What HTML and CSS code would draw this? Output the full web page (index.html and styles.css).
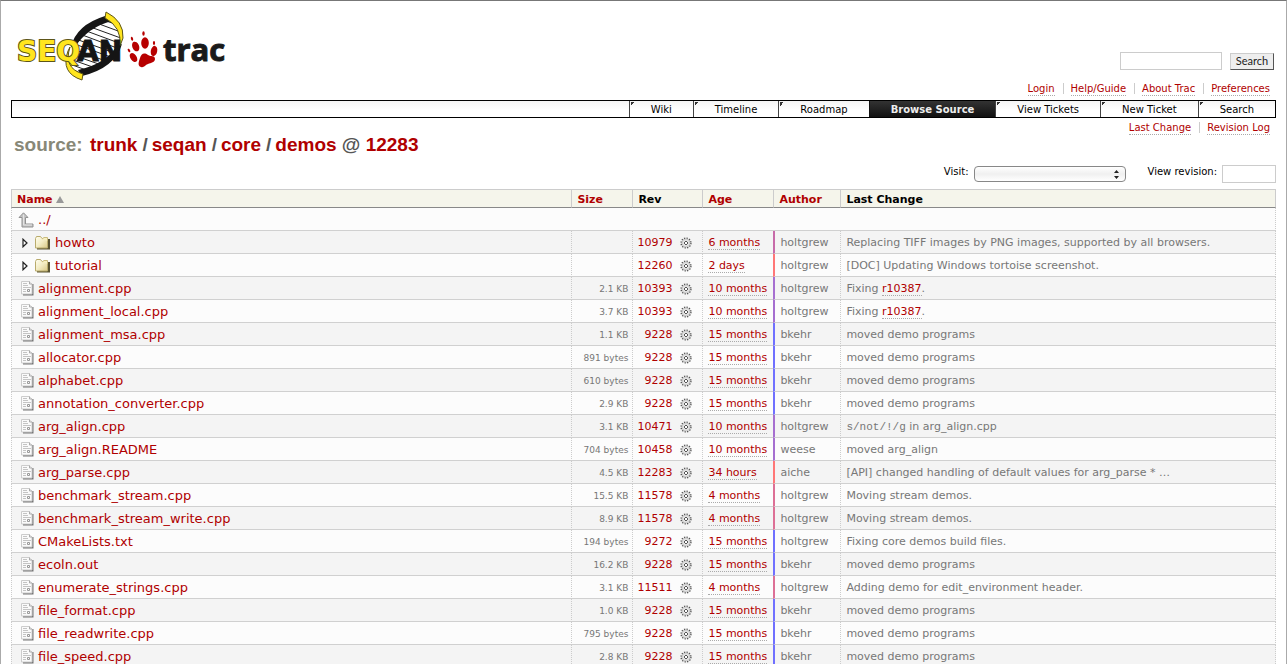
FILE: index.html
```
<!DOCTYPE html>
<html lang="en">
<head>
<meta charset="utf-8">
<title>trunk/seqan/core/demos – SeqAn Trac</title>
<link rel="stylesheet" href="styles.css">
</head>
<body>
<svg class="sprites" aria-hidden="true">
  <linearGradient id="fold" x1="0" y1="0" x2="1" y2="1"><stop offset="0" stop-color="#fffef0"/><stop offset=".5" stop-color="#f3ecc4"/><stop offset="1" stop-color="#d9c987"/></linearGradient>
  <symbol id="file" viewBox="0 0 13 15">
    <path d="M11.500 3V13.500H2" fill="none" stroke="#777" stroke-width="2"/>
    <path d="M.5.500h8l2.500 2.500v10H.5z" fill="#fafafa" stroke="#ccc"/>
    <path d="M8.500.500v2.500H11" fill="#eee" stroke="#aaa"/>
    <path d="M2 2.500h4M2 4.500h5M2 6.500h8M2 8.500h3M2 10.500h3" stroke="#c4c4c4"/>
    <path d="M6.500 8.500h2v2h-2z" fill="none" stroke="#999"/>
  </symbol>
  <symbol id="folder" viewBox="0 0 16 14">
    <path d="M14 3v9.500H2" fill="none" stroke="#5a5433" stroke-width="2"/>
    <path d="M.5 2.500l1-2h4l1.500 2h5.500v9.500H.5z" fill="url(#fold)" stroke="#b9ab6c"/>
    <path d="M7 3l2-1.500h3.500V5" fill="#f7efc0" stroke="#c9bb7c"/>
  </symbol>
  <symbol id="expand" viewBox="0 0 6 10"><path d="M1 1.200v7.600L5 5z" fill="#fff" stroke="#222" stroke-width="1.200"/></symbol>
  <symbol id="up" viewBox="0 0 16 16">
    <path d="M5.500.800L10 5.500H7.500v6.500H15v3H4V5.500H1z" fill="#c4c4c4" stroke="#929292"/>
    <path d="M5.500 2.500V13H14" fill="none" stroke="#e4e4e4"/>
  </symbol>
  <symbol id="gear" viewBox="0 0 12 12">
    <circle cx="6" cy="6" r="4.900" fill="#eee" stroke="#555" stroke-width="1.400" stroke-dasharray="1.280 1.280"/>
    <circle cx="6" cy="6" r="4" fill="#e2e2e2" stroke="#aaa" stroke-width=".5"/>
    <path d="M6 4l2 2-2 2-2-2z" fill="#fff" stroke="#444" stroke-width=".9"/>
  </symbol>
  <clipPath id="hull"><path d="M56 42Q60 18 88 7L103 14Q107 26 98 42Q88 56 64 63Q50 60 56 42Z"/></clipPath>
</svg>
<div class="page">
  <header class="banner">
    <a class="logo" href="#" aria-label="SeqAn trac">
      <svg width="208" height="72" viewBox="0 0 208 72">
        <path d="M56 42Q60 18 88 7L103 14Q107 26 98 42Q88 56 64 63Q50 60 56 42Z" fill="#fff"/>
        <path clip-path="url(#hull)" d="M78 6l34 12M74 10l38 14M68 14l44 16M64 18l46 17M60 22l48 18M56 27l50 18M52 31l50 18M50 36l50 18M50 42l46 16M50 47l40 14M50 52l30 11M50 57l25 9" stroke="#222"/>
        <path d="M54 36Q59 14 88 5L95 10Q71 16 58 36Z" fill="#151515"/>
        <path d="M61 59Q88 53 99 36L105 33Q98 57 65 65Z" fill="#151515"/>
        <path d="M89 1Q107 10 106 27L103 35Q105 16 88 7Z" fill="#ffe51f" stroke="#5d5518"/>
        <path d="M53 36Q46 57 66 63L65 69Q43 62 51 40Z" fill="#ffe51f" stroke="#5d5518"/>
        <text class="seq" x="0" y="50">SEQ</text>
        <text class="an" x="60" y="50">AN</text>
        <g fill="#b70000">
          <path d="M123 47C124 43 127 41 131 44C134 46 138 44 138 48C138 51 134 52 131 53C128 54 127 57 124 56C120 55 122 50 123 47Z"/>
          <ellipse cx="128" cy="32" rx="3.800" ry="5.700"/>
          <ellipse cx="118.700" cy="35.500" rx="3.400" ry="5" transform="rotate(-22 118.700 35.500)"/>
          <ellipse cx="137" cy="40" rx="3.200" ry="5.200" transform="rotate(12 137 40)"/>
          <ellipse cx="116.500" cy="46.500" rx="3.100" ry="5" transform="rotate(-35 116.500 46.500)"/>
          <ellipse cx="126.500" cy="22.500" rx="1.200" ry="2.200"/>
          <ellipse cx="115" cy="27.700" rx="1.100" ry="2" transform="rotate(-15 115 27.700)"/>
          <ellipse cx="137" cy="32" rx="1.100" ry="2"/>
          <ellipse cx="112" cy="39.500" rx="1.100" ry="1.900" transform="rotate(-30 112 39.500)"/>
        </g>
        <text class="trac" x="146" y="50">trac</text>
      </svg>
    </a>
    <form class="search">
      <input type="text" aria-label="Search query"><button type="button">Search</button>
    </form>
  </header>
  <nav class="links meta" aria-label="Account"><a href="#">Login</a><a href="#">Help/Guide</a><a href="#">About Trac</a><a href="#">Preferences</a></nav>
  <nav class="mainnav" aria-label="Main"><a href="#">Wiki</a><a href="#">Timeline</a><a href="#">Roadmap</a><a class="active" href="#">Browse Source</a><a href="#">View Tickets</a><a href="#">New Ticket</a><a href="#">Search</a></nav>
  <nav class="links context" aria-label="Context"><a href="#">Last Change</a><a href="#">Revision Log</a></nav>
  <h1><span class="first">source:</span> <a href="#">trunk</a><i>/</i><a href="#">seqan</a><i>/</i><a href="#">core</a><i>/</i><a href="#">demos</a> @ <a href="#">12283</a></h1>
  <form class="jump">
    <label for="visit">Visit:</label>
    <span class="selectbox"><select id="visit"><option></option></select><svg width="5" height="9" viewBox="0 0 5 9"><path d="M0 3L2.500 0 5 3zM0 6l2.500 3L5 6z" fill="#222"/></svg></span>
    <label for="rev">View revision:</label>
    <input id="rev" type="text">
  </form>
  <table>
    <colgroup><col class="c-name"><col class="c-size"><col class="c-rev"><col class="c-age"><col class="c-author"><col></colgroup>
    <thead><tr><th><a href="#">Name</a> <svg width="8" height="7" viewBox="0 0 8 7"><path d="M4 0l4 7H0z" fill="#999"/></svg></th><th><a href="#">Size</a></th><th>Rev</th><th><a href="#">Age</a></th><th><a href="#">Author</a></th><th>Last Change</th></tr></thead>
    <tbody>
    <tr><td class="name parent" colspan="6"><a href="#"><svg class="up"><use href="#up"/></svg>../</a></td></tr>
    <tr><td class="name dir"><a href="#"><svg class="ex"><use href="#expand"/></svg><svg class="fo"><use href="#folder"/></svg>howto</a></td><td class="size"></td><td class="rev"><a href="#">10979<svg><use href="#gear"/></svg></a></td><td class="age"><a href="#">6 months</a></td><td class="author m6">holtgrew</td><td class="change">Replacing TIFF images by PNG images, supported by all browsers.</td></tr>
    <tr><td class="name dir"><a href="#"><svg class="ex"><use href="#expand"/></svg><svg class="fo"><use href="#folder"/></svg>tutorial</a></td><td class="size"></td><td class="rev"><a href="#">12260<svg><use href="#gear"/></svg></a></td><td class="age"><a href="#">2 days</a></td><td class="author new">holtgrew</td><td class="change">[DOC] Updating Windows tortoise screenshot.</td></tr>
    <tr><td class="name"><a href="#"><svg><use href="#file"/></svg>alignment.cpp</a></td><td class="size">2.1 KB</td><td class="rev"><a href="#">10393<svg><use href="#gear"/></svg></a></td><td class="age"><a href="#">10 months</a></td><td class="author m10">holtgrew</td><td class="change">Fixing <a href="#">r10387</a>.</td></tr>
    <tr><td class="name"><a href="#"><svg><use href="#file"/></svg>alignment_local.cpp</a></td><td class="size">3.7 KB</td><td class="rev"><a href="#">10393<svg><use href="#gear"/></svg></a></td><td class="age"><a href="#">10 months</a></td><td class="author m10">holtgrew</td><td class="change">Fixing <a href="#">r10387</a>.</td></tr>
    <tr><td class="name"><a href="#"><svg><use href="#file"/></svg>alignment_msa.cpp</a></td><td class="size">1.1 KB</td><td class="rev"><a href="#">9228<svg><use href="#gear"/></svg></a></td><td class="age"><a href="#">15 months</a></td><td class="author">bkehr</td><td class="change">moved demo programs</td></tr>
    <tr><td class="name"><a href="#"><svg><use href="#file"/></svg>allocator.cpp</a></td><td class="size">891 bytes</td><td class="rev"><a href="#">9228<svg><use href="#gear"/></svg></a></td><td class="age"><a href="#">15 months</a></td><td class="author">bkehr</td><td class="change">moved demo programs</td></tr>
    <tr><td class="name"><a href="#"><svg><use href="#file"/></svg>alphabet.cpp</a></td><td class="size">610 bytes</td><td class="rev"><a href="#">9228<svg><use href="#gear"/></svg></a></td><td class="age"><a href="#">15 months</a></td><td class="author">bkehr</td><td class="change">moved demo programs</td></tr>
    <tr><td class="name"><a href="#"><svg><use href="#file"/></svg>annotation_converter.cpp</a></td><td class="size">2.9 KB</td><td class="rev"><a href="#">9228<svg><use href="#gear"/></svg></a></td><td class="age"><a href="#">15 months</a></td><td class="author">bkehr</td><td class="change">moved demo programs</td></tr>
    <tr><td class="name"><a href="#"><svg><use href="#file"/></svg>arg_align.cpp</a></td><td class="size">3.1 KB</td><td class="rev"><a href="#">10471<svg><use href="#gear"/></svg></a></td><td class="age"><a href="#">10 months</a></td><td class="author m10">holtgrew</td><td class="change"><code>s/not/!/g</code> in arg_align.cpp</td></tr>
    <tr><td class="name"><a href="#"><svg><use href="#file"/></svg>arg_align.README</a></td><td class="size">704 bytes</td><td class="rev"><a href="#">10458<svg><use href="#gear"/></svg></a></td><td class="age"><a href="#">10 months</a></td><td class="author m10">weese</td><td class="change">moved arg_align</td></tr>
    <tr><td class="name"><a href="#"><svg><use href="#file"/></svg>arg_parse.cpp</a></td><td class="size">4.5 KB</td><td class="rev"><a href="#">12283<svg><use href="#gear"/></svg></a></td><td class="age"><a href="#">34 hours</a></td><td class="author new">aiche</td><td class="change">[API] changed handling of default values for arg_parse * …</td></tr>
    <tr><td class="name"><a href="#"><svg><use href="#file"/></svg>benchmark_stream.cpp</a></td><td class="size">15.5 KB</td><td class="rev"><a href="#">11578<svg><use href="#gear"/></svg></a></td><td class="age"><a href="#">4 months</a></td><td class="author m4">holtgrew</td><td class="change">Moving stream demos.</td></tr>
    <tr><td class="name"><a href="#"><svg><use href="#file"/></svg>benchmark_stream_write.cpp</a></td><td class="size">8.9 KB</td><td class="rev"><a href="#">11578<svg><use href="#gear"/></svg></a></td><td class="age"><a href="#">4 months</a></td><td class="author m4">holtgrew</td><td class="change">Moving stream demos.</td></tr>
    <tr><td class="name"><a href="#"><svg><use href="#file"/></svg>CMakeLists.txt</a></td><td class="size">194 bytes</td><td class="rev"><a href="#">9272<svg><use href="#gear"/></svg></a></td><td class="age"><a href="#">15 months</a></td><td class="author">holtgrew</td><td class="change">Fixing core demos build files.</td></tr>
    <tr><td class="name"><a href="#"><svg><use href="#file"/></svg>ecoln.out</a></td><td class="size">16.2 KB</td><td class="rev"><a href="#">9228<svg><use href="#gear"/></svg></a></td><td class="age"><a href="#">15 months</a></td><td class="author">bkehr</td><td class="change">moved demo programs</td></tr>
    <tr><td class="name"><a href="#"><svg><use href="#file"/></svg>enumerate_strings.cpp</a></td><td class="size">3.1 KB</td><td class="rev"><a href="#">11511<svg><use href="#gear"/></svg></a></td><td class="age"><a href="#">4 months</a></td><td class="author m4">holtgrew</td><td class="change">Adding demo for edit_environment header.</td></tr>
    <tr><td class="name"><a href="#"><svg><use href="#file"/></svg>file_format.cpp</a></td><td class="size">1.0 KB</td><td class="rev"><a href="#">9228<svg><use href="#gear"/></svg></a></td><td class="age"><a href="#">15 months</a></td><td class="author">bkehr</td><td class="change">moved demo programs</td></tr>
    <tr><td class="name"><a href="#"><svg><use href="#file"/></svg>file_readwrite.cpp</a></td><td class="size">795 bytes</td><td class="rev"><a href="#">9228<svg><use href="#gear"/></svg></a></td><td class="age"><a href="#">15 months</a></td><td class="author">bkehr</td><td class="change">moved demo programs</td></tr>
    <tr><td class="name"><a href="#"><svg><use href="#file"/></svg>file_speed.cpp</a></td><td class="size">2.8 KB</td><td class="rev"><a href="#">9228<svg><use href="#gear"/></svg></a></td><td class="age"><a href="#">15 months</a></td><td class="author">bkehr</td><td class="change">moved demo programs</td></tr>
    </tbody>
  </table>
</div>
</body>
</html>
```
FILE: styles.css
```
* { box-sizing: border-box; }
body { margin: 0; background: #fff; color: #000; font: 11px/14px Verdana, "DejaVu Sans", sans-serif; }
a { color: #b00000; text-decoration: none; }
.sprites { position: absolute; width: 0; height: 0; }
.page { height: 100vh; overflow: hidden; padding: 10px 10px 0; border: 1px solid #aaa; border-top-color: #777; border-bottom: 0; }

.banner { display: flex; justify-content: space-between; align-items: flex-end; height: 72px; }
.logo { margin-left: 6px; }
.logo svg { display: block; overflow: visible; }
.logo text { font-weight: bold; }
.seq, .an { font-family: "DejaVu Sans", sans-serif; font-size: 28px; }
.seq { fill: #ffe51f; stroke: #5d5518; stroke-width: 2; paint-order: stroke; }
.an { fill: #151515; stroke: #151515; stroke-width: 1; }
.trac { font-family: "Open Sans", sans-serif; font-size: 31px; fill: #1a1a1a; stroke: #1a1a1a; stroke-width: 1; }

input { height: 18px; padding: 0 2px; border: 1px solid #ccc; background: #fff; font: inherit; }
.search { display: flex; align-items: center; gap: 8px; margin: 0 2px 13px 0; }
.search input { width: 102px; }
.search button { width: 44px; height: 17px; padding: 0; border: 1px solid #ccc; border-right-color: #555; border-bottom-color: #555; background: #eee; color: #222; font: 11px/14px Lato, sans-serif; }

.links { display: flex; justify-content: flex-end; align-items: flex-start; font-size: 10px; line-height: 12px; }
.links a { border-bottom: 1px dotted #aaa; margin-left: 16px; position: relative; }
.links a + a::before { content: ""; position: absolute; left: -8px; top: 0; height: 11px; border-left: 1px solid #ccc; }
.meta { padding-right: 6px; height: 17px; }
.context { padding: 4px 6px 0 0; height: 16px; }

.mainnav { display: flex; justify-content: flex-end; height: 18px; border: 1px solid #000; background: linear-gradient(#f4f4f4, #fff 60%); font-size: 10px; line-height: 18px; }
.mainnav a { color: #000; padding: 0 21px; border-left: 1px solid #444; background: linear-gradient(135deg, #333 50%, transparent 50%) 1px 1px / 4px 4px no-repeat; }
.mainnav a.active { color: #eee; font-weight: bold; background: linear-gradient(#333, #111); border-color: #111; }

h1 { margin: 0 0 0 3px; color: #555; font: bold 19px/22px Arial, "Liberation Sans", sans-serif; }
h1 i { margin: 0 4px 0 5px; font-style: normal; }
.first { color: #887; margin-right: 2px; }

.jump { display: flex; justify-content: flex-end; align-items: center; height: 18px; margin: 9px 0 6px; font-size: 10px; line-height: 14px; }
.jump label { margin: 0 5px 4px 0; }
.jump input { width: 54px; }
.selectbox { position: relative; margin-right: 22px; }
.selectbox select { display: block; width: 152px; height: 16px; border: 1px solid #888; border-radius: 4px; background: linear-gradient(#fff, #f0f0f0 50%, #fff); appearance: none; }
.selectbox svg { position: absolute; right: 7px; top: 4px; }

table { width: 100%; table-layout: fixed; border-collapse: separate; border-spacing: 0; border: 1px solid #ccc; border-width: 1px 0 0; }
.c-name { width: 44.3%; }
.c-size { width: 61px; }
.c-rev { width: 70px; }
.c-age { width: 71px; }
.c-author { width: 67px; }
th { height: 18px; padding: 2px 5px 0; text-align: left; background: #f5f5eb; border-left: 1px solid #ccc; border-bottom: 1px solid #888; }
th:last-child { border-right: 1px solid #ccc; }
td { height: 23px; padding: 2px 5px 0; border-left: 1px dotted #ccc; border-bottom: 1px solid #d0d0d0; white-space: nowrap; color: #777; }
td:last-child { border-right: 1px dotted #ccc; }
tbody tr { background: #fcfcfc; }
tbody tr:nth-child(even) { background: #f4f4f4; }
.name { padding-left: 9px; font-size: 13px; line-height: 16px; }
.name a { display: flex; align-items: center; }
.name svg { width: 13px; height: 15px; margin: 0 4px 1px 0; }
.name .ex { width: 6px; height: 10px; margin: 0 7px 0 1px; }
.name .fo { width: 16px; height: 14px; }
.name .up { width: 16px; height: 16px; }
.parent { padding-left: 6px; }
.size { font-size: 9px; text-align: right; padding-right: 4px; }
.rev { padding: 2px 10px 0 0; }
.rev a { display: flex; justify-content: flex-end; align-items: center; gap: 8px; }
.rev svg { width: 12px; height: 12px; }
.age a, .change a { border-bottom: 1px dotted #aaa; }
.author { border-left: 2px solid #7070ff; }
.m10 { border-left-color: #a66fd0; }
.m6 { border-left-color: #c76ba9; }
.m4 { border-left-color: #dd7096; }
.new { border-left-color: #ff7777; }
code { font: 11px "Liberation Mono", monospace; }
```
